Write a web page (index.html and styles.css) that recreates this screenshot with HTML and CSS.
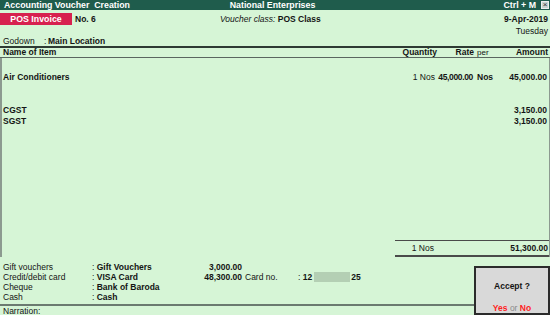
FILE: index.html
```html
<!DOCTYPE html>
<html>
<head>
<meta charset="utf-8">
<link rel="stylesheet" href="styles.css">
</head>
<body>
<div class="app">
  <div class="titlebar">
    <div class="tb-left">Accounting Voucher&nbsp; Creation</div>
    <div class="tb-center">National Enterprises</div>
    <div class="tb-right"><span>Ctrl + M</span><span class="close">×</span></div>
  </div>

  <div class="head">
    <div class="vrow">
      <div class="vtype">POS Invoice</div>
      <div class="vno">No. 6</div>
      <div class="vclass"><span class="it">Voucher class:</span> <b>POS Class</b></div>
      <div class="vdate">9-Apr-2019</div>
    </div>
    <div class="dayrow">Tuesday</div>
    <div class="godown"><span class="glabel">Godown</span><span class="gcolon">:</span><b>Main Location</b></div>
  </div>

  <div class="cols colhead">
    <div class="c-name">Name of Item</div>
    <div class="c-qty">Quantity</div>
    <div class="c-rate">Rate</div>
    <div class="c-per">per</div>
    <div class="c-amt">Amount</div>
  </div>

  <div class="items">
    <div class="cols item first">
      <div class="c-name">Air Conditioners</div>
      <div class="c-qty reg">1 Nos</div>
      <div class="c-rate narrow">45,000.00</div>
      <div class="c-per">Nos</div>
      <div class="c-amt">45,000.00</div>
    </div>
    <div class="cols item tax">
      <div class="c-name">CGST</div>
      <div class="c-qty"></div>
      <div class="c-rate"></div>
      <div class="c-per"></div>
      <div class="c-amt">3,150.00</div>
    </div>
    <div class="cols item">
      <div class="c-name">SGST</div>
      <div class="c-qty"></div>
      <div class="c-rate"></div>
      <div class="c-per"></div>
      <div class="c-amt">3,150.00</div>
    </div>
    <div class="spacer"></div>
    <div class="totals">
      <div class="tot-box">
        <div class="tot-qty">1 Nos</div>
        <div class="tot-amt">51,300.00</div>
      </div>
    </div>
  </div>

  <div class="bottom">
    <div class="pay">
      <div class="payrows">
        <div class="prow"><span class="plabel">Gift vouchers</span><span class="pval">: <b>Gift Vouchers</b></span><span class="pamt">3,000.00</span></div>
        <div class="prow"><span class="plabel">Credit/debit card</span><span class="pval">: <b>VISA Card</b></span><span class="pamt">48,300.00</span><span class="card">Card no.</span><span class="cardno">: <b>12</b><span class="mask"></span><b>25</b></span></div>
        <div class="prow"><span class="plabel">Cheque</span><span class="pval">: <b>Bank of Baroda</b></span></div>
        <div class="prow"><span class="plabel">Cash</span><span class="pval">: <b>Cash</b></span></div>
      </div>
      <div class="narration">Narration:</div>
    </div>
    <div class="accept">
      <div class="acc-q">Accept ?</div>
      <div class="acc-yn"><span class="red">Yes</span> <span class="or">or</span> <span class="red">No</span></div>
    </div>
  </div>
</div>
</body>
</html>
```

FILE: styles.css
```css
* { box-sizing: border-box; }
html, body { margin: 0; padding: 0; }
body {
  width: 550px;
  height: 315px;
  overflow: hidden;
  background: #d6f5d6;
  font-family: "Liberation Sans", Arial, sans-serif;
  font-size: 8.5px;
  color: #141414;
  line-height: 10px;
}
b { font-weight: bold; }
.app {
  display: flex;
  flex-direction: column;
  height: 315px;
}
.titlebar {
  height: 10px;
  background: #1f5c4c;
  color: #fff;
  font-weight: bold;
  display: grid;
  grid-template-columns: 1fr auto 1fr;
  align-items: center;
  padding: 0 1px 0 4px;
  font-size: 8.8px;
}
.tb-center { padding-right: 8px; }
.tb-right {
  display: flex;
  justify-content: flex-end;
  align-items: center;
  gap: 5px;
}
.close {
  width: 8px;
  height: 8px;
  background: #c8d4cf;
  color: #333;
  border: 1px solid #eee;
  font-size: 8px;
  line-height: 6px;
  text-align: center;
  font-weight: normal;
}
.head { padding-top: 3px; }
.vrow {
  display: flex;
  align-items: center;
  height: 12px;
}
.vtype {
  width: 72px;
  height: 12px;
  background: #d7214f;
  color: #fff;
  font-weight: bold;
  text-align: center;
  line-height: 12px;
  font-size: 8.8px;
}
.vno {
  width: 148px;
  padding-left: 3px;
  font-weight: bold;
}
.vclass { flex: 1; }
.it { font-style: italic; }
.vdate {
  font-weight: bold;
  padding-right: 2px;
}
.dayrow {
  text-align: right;
  padding-right: 2px;
  height: 11px;
  line-height: 12px;
}
.godown {
  height: 10px;
  line-height: 11px;
  padding-left: 3px;
}
.glabel { display: inline-block; width: 41px; }
.gcolon { display: inline-block; width: 4px; }

.cols {
  display: grid;
  grid-template-columns: 1fr 50px 38px 15px 58px;
  padding-right: 2px;
}
.c-name { padding-left: 3px; }
.c-qty { text-align: right; }
.c-rate { text-align: right; padding-right: 1px; }
.c-per { padding-left: 2px; }
.c-amt { text-align: right; }

.colhead {
  border-top: 2px solid #2e3a33;
  border-bottom: 1px solid #5a6660;
  height: 12px;
  font-weight: bold;
  line-height: 9px;
}
.colhead .c-per { font-weight: normal; font-size: 8px; }

.items {
  flex: 1;
  display: flex;
  flex-direction: column;
  border-left: 2px solid #8c9a90;
  border-right: 1px solid #8c9a90;
}
.item { font-weight: bold; height: 11px; line-height: 11px; }
.item .c-name { padding-left: 1px; }
.item .reg { font-weight: normal; padding-right: 1px; }
.item .narrow { letter-spacing: -0.35px; white-space: nowrap; }
.item .c-per { padding-left: 3px; }
.item.first { margin-top: 14px; }
.item.tax { margin-top: 22px; }
.spacer { flex: 1; }
.totals {
  display: flex;
  justify-content: flex-end;
}
.tot-box {
  width: 154px;
  border-top: 1px solid #4a4a4a;
  border-bottom: 2px solid #4a4a4a;
  display: flex;
  height: 17px;
  align-items: center;
  padding-right: 1px;
}
.tot-qty { width: 39px; text-align: right; }
.tot-amt { flex: 1; text-align: right; font-weight: bold; }

.bottom {
  display: flex;
  height: 58px;
}
.pay {
  flex: 1;
  display: flex;
  flex-direction: column;
}
.payrows {
  padding-top: 5px;
  padding-left: 3px;
  flex: 1;
}
.prow {
  display: flex;
  height: 10px;
  line-height: 10px;
}
.plabel { width: 89px; }
.pval { width: 100px; }
.pamt { width: 50px; text-align: right; font-weight: bold; }
.card { width: 56px; padding-left: 3px; }
.cardno { display: flex; white-space: pre; }
.mask {
  display: inline-block;
  width: 36px;
  height: 10px;
  background: #b4cfb4;
  margin: 0 1px 0 2px;
}
.narration {
  border-top: 2px solid #6b7a70;
  height: 11px;
  padding-left: 3px;
  line-height: 10px;
}
.accept {
  width: 76px;
  margin-top: 9px;
  background: #d9d9d9;
  border: 2px solid #2b2b2b;
  display: flex;
  flex-direction: column;
  align-items: center;
  font-weight: bold;
}
.acc-q { margin-top: 13px; }
.acc-yn { margin-top: 12px; }
.red { color: #ff1f1f; }
.or { color: #8a8a8a; font-weight: normal; }
```
